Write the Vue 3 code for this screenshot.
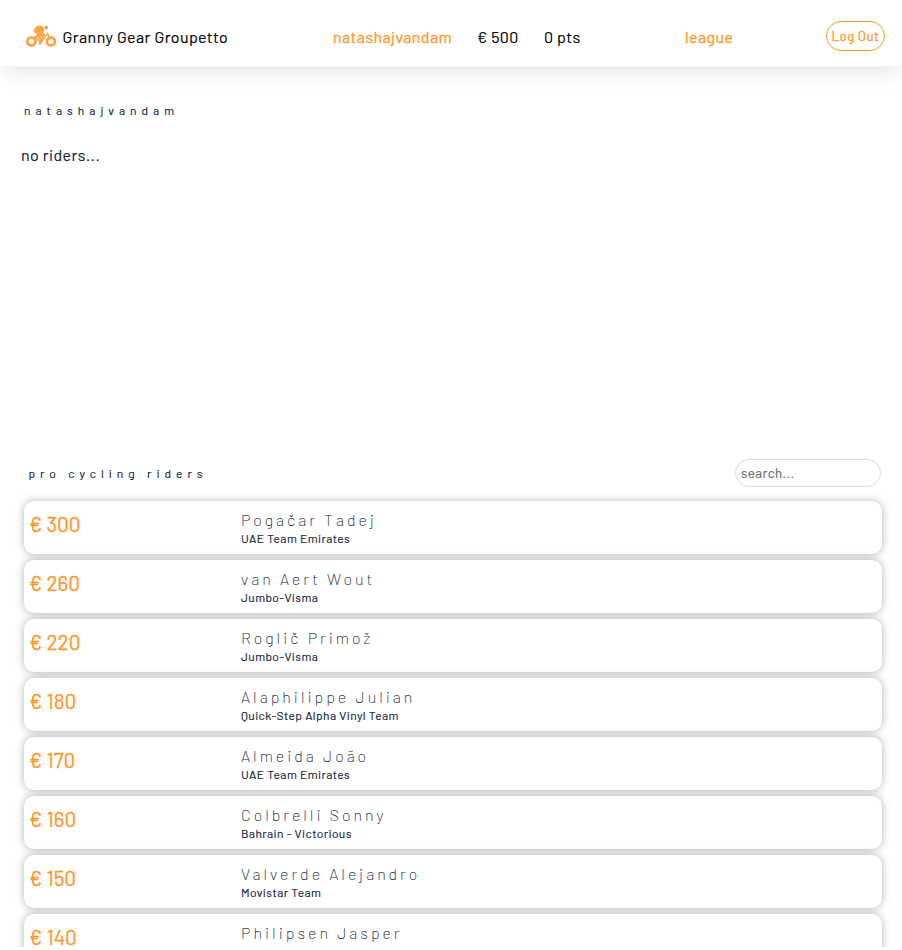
<script setup>
const riders = [
  { price: 300, name: 'Pogačar Tadej', team: 'UAE Team Emirates' },
  { price: 260, name: 'van Aert Wout', team: 'Jumbo-Visma' },
  { price: 220, name: 'Roglič Primož', team: 'Jumbo-Visma' },
  { price: 180, name: 'Alaphilippe Julian', team: 'Quick-Step Alpha Vinyl Team' },
  { price: 170, name: 'Almeida João', team: 'UAE Team Emirates' },
  { price: 160, name: 'Colbrelli Sonny', team: 'Bahrain - Victorious' },
  { price: 150, name: 'Valverde Alejandro', team: 'Movistar Team' },
  { price: 140, name: 'Philipsen Jasper', team: '' },
]
</script>

<template>
  <div class="page">
    <header class="bar">
      <div class="brand">
        <svg class="logo" viewBox="0 0 32 24" aria-hidden="true">
          <g fill="none" stroke="#ffa347" stroke-linecap="round" stroke-linejoin="round">
            <circle cx="6.4" cy="17.4" r="4" stroke-width="2.8" />
            <circle cx="25.9" cy="17.4" r="4" stroke-width="2.8" />
            <path d="M8 14.500 12 12M25 15 22.500 9M10.500 12.500l3.500 4.500M23 9.500l-6 7" stroke-width="1.500" />
            <path d="M13 11.500l2.500 3.500-.5 5M18.500 11.500l-2 6" stroke-width="2.200" />
          </g>
          <path d="M8.700 8C8.800 3.800 11.600 1.300 15.200 1.500c2.700.1 4.300 2 3.900 4.300L18.700 9.200l-3 .8-5-.5z" fill="#ffa347" />
          <path d="M11 9.800l7-.8 2.200 1.700-1.500 1.500-5.700.3z" fill="#ffa347" />
          <path d="M19.800 2.300l2.300-.7 1 1.700-.7 2.300-1.900-.2-.9-1.500z" fill="#ffa347" />
        </svg>
        <span class="title">Granny Gear Groupetto</span>
      </div>
      <nav class="stats">
        <a class="user">natashajvandam</a>
        <span>€ 500</span>
        <span>0 pts</span>
      </nav>
      <a class="league">league</a>
      <button class="logout">Log Out</button>
    </header>

    <section class="team">
      <h2 class="owner">natashajvandam</h2>
      <p class="empty">no riders...</p>
    </section>

    <section class="market">
      <div class="market-head">
        <h2 class="heading">pro cycling riders</h2>
        <input class="search" type="text" placeholder="search..." />
      </div>
      <ul class="list">
        <li v-for="r in riders" :key="r.name" class="card">
          <span class="price">€ {{ r.price }}</span>
          <div class="info">
            <span class="name">{{ r.name }}</span>
            <span class="squad">{{ r.team }}</span>
          </div>
        </li>
      </ul>
    </section>
  </div>
</template>

<style>
body {
  margin: 0;
  overflow: hidden;
  background: #fff;
}
</style>

<style scoped>
.page {
  height: 947px;
  overflow: hidden;
  font-family: Barlow, Roboto, sans-serif;
  font-size: 16px;
  letter-spacing: 0.41px;
  color: #101a38;
  white-space: nowrap;
  -webkit-text-stroke: 0.15px currentColor;
}
.bar {
  display: grid;
  grid-template-columns: 333px 352px 141px 59px;
  height: 66px;
  color: #000;
  box-shadow: 0 8px 20px -2px rgba(0, 0, 0, 0.1);
}
.brand {
  display: flex;
  padding: 24px 0 0 25px;
}
.logo {
  width: 32px;
  height: 24px;
}
.title {
  margin-left: 5.6px;
  line-height: 26px;
}
.stats {
  display: grid;
  grid-template-columns: 144px 67px auto;
  padding-top: 24px;
  line-height: 26px;
}
.user,
.league,
.logout,
.price {
  color: #ff962a;
  -webkit-text-stroke-width: 0.3px;
}
.league {
  padding-top: 24px;
  line-height: 26px;
}
.logout {
  width: 59px;
  height: 30px;
  margin-top: 21px;
  padding: 0;
  border: 1px solid #ff962a;
  border-radius: 15px;
  background: #fff;
  font: 13.3px Barlow, Roboto, sans-serif;
  letter-spacing: 0.42px;
}
.team {
  height: 393px;
}
.owner,
.heading {
  margin: 0;
  font-size: 12px;
  font-weight: 400;
  line-height: 16px;
  letter-spacing: 5px;
}
.owner {
  padding: 36px 0 0 24px;
}
.empty {
  margin: 0;
  padding: 27px 0 0 21px;
  line-height: 20px;
}
.market-head {
  display: flex;
  justify-content: space-between;
  height: 42px;
  padding: 0 21px 0 28.4px;
}
.heading {
  padding-top: 6px;
}
.search {
  box-sizing: border-box;
  width: 146px;
  height: 28px;
  padding: 0 5px;
  border: 1px solid #ddd;
  border-radius: 14px;
  background: #fff;
  font: 13.3px Barlow, Roboto, sans-serif;
  letter-spacing: 0.42px;
}
.search::placeholder {
  color: #666;
}
.list {
  display: grid;
  gap: 6px;
  margin: 0;
  padding: 0 20px 0 24px;
  list-style: none;
}
.card {
  display: grid;
  grid-template-columns: 212px 1fr;
  box-sizing: border-box;
  height: 53px;
  padding-left: 5px;
  border-radius: 10px;
  background: #fff;
  box-shadow: 0 0 8px rgba(0, 0, 0, 0.3);
}
.price {
  padding-top: 11px;
  font-size: 20.8px;
  line-height: 24px;
  letter-spacing: 0;
}
.info {
  display: flex;
  flex-direction: column;
  padding-top: 9px;
}
.name {
  font-weight: 200;
  line-height: 20px;
  letter-spacing: 3px;
}
.squad {
  font-size: 12px;
  line-height: 16px;
  letter-spacing: 0.4px;
}
</style>
